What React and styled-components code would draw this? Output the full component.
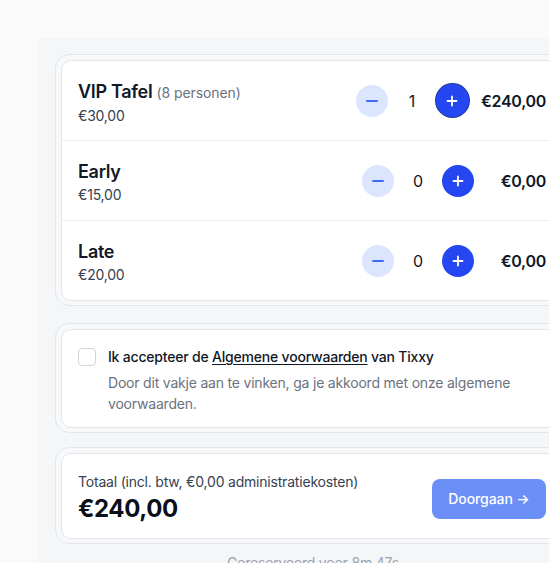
import React from "react";
import styled, { createGlobalStyle, css } from "styled-components";

const Global = createGlobalStyle`
  html, body { margin: 0; padding: 0; overflow: hidden; background: #fafafb; }
  body { font-family: Inter, "Noto Sans", sans-serif; color: #111827; letter-spacing: -0.2px; -webkit-font-smoothing: antialiased; }
  * { box-sizing: border-box; }
`;

const Page = styled.div`
  width: 700px;
  padding: 38px 0 0 38px;
`;

const Panel = styled.div`
  width: 550px;
  background: #f5f6f8;
  padding: 16px 17px 0 17px;
  display: flex;
  flex-direction: column;
`;

const Ring = styled.div`
  border: 1px solid #e4e6ea;
  border-radius: 14px;
  padding: 5px 4px 4px 5px;
  background: #f7f8fa;
  margin-top: ${(p) => p.$mt || 0}px;
`;

const Card = styled.div`
  background: #fff;
  border: 1px solid #e4e6ea;
  border-radius: 10px;
  overflow: hidden;
`;

const Row = styled.div`
  height: 79px;
  display: flex;
  align-items: center;
  padding: 0 19px 0 16px;
  & + & { border-top: 1px solid #eef0f3; height: 80px; }
`;

const Info = styled.div`
  flex: 1;
  display: flex;
  flex-direction: column;
  gap: 1px;
  padding-top: 4px;
`;

const Name = styled.div`
  font-size: 18px;
  font-weight: 600;
  line-height: 24px;
  color: #111827;
  letter-spacing: -0.3px;
`;

const Note = styled.span`
  font-size: 14px;
  font-weight: 400;
  color: #6b7280;
  letter-spacing: -0.1px;
`;

const Price = styled.div`
  font-size: 14px;
  color: #374151;
  line-height: 20px;
`;

const Stepper = styled.div`
  display: flex;
  align-items: center;
  gap: 12px;
`;

const RoundBtn = styled.button`
  width: 32px;
  height: 32px;
  border-radius: 50%;
  border: none;
  padding: 0;
  display: flex;
  align-items: center;
  justify-content: center;
  ${(p) =>
    p.$variant === "minus"
      ? css`background: #dbe6fe; color: #3d6cf2;`
      : css`background: #2447f2; color: #fff;`}
  ${(p) => p.$focus && css`box-shadow: 0 0 0 1px #1e3a9a; width: 33px; height: 33px;`}
`;

const Count = styled.div`
  width: 24px;
  text-align: center;
  font-size: 16px;
  color: #111827;
`;

const Amount = styled.div`
  min-width: 60px;
  text-align: right;
  font-size: 16px;
  font-weight: 600;
  color: #111827;
  letter-spacing: -0.3px;
`;

const Terms = styled.div`
  display: flex;
  gap: 12px;
  padding: 17px 19px 13px 16px;
`;

const Box = styled.div`
  width: 18px;
  height: 18px;
  flex: none;
  border: 1px solid #d1d5db;
  border-radius: 4px;
  margin-top: 1px;
  background: #fff;
`;

const TermsText = styled.div`
  display: flex;
  flex-direction: column;
  gap: 5px;
`;

const TermsLabel = styled.div`
  font-size: 14px;
  font-weight: 500;
  line-height: 20px;
  color: #111827;
  a { color: inherit; text-decoration: underline; text-underline-offset: 2px; }
`;

const TermsDesc = styled.div`
  font-size: 14px;
  line-height: 21px;
  color: #6b7280;
`;

const TotalRow = styled.div`
  display: flex;
  align-items: center;
  justify-content: space-between;
  padding: 18px 19px 13px 16px;
`;

const TotalInfo = styled.div`
  display: flex;
  flex-direction: column;
  gap: 1px;
`;

const TotalLabel = styled.div`
  font-size: 14px;
  line-height: 20px;
  color: #374151;
`;

const TotalValue = styled.div`
  font-size: 24px;
  font-weight: 700;
  line-height: 32px;
  color: #0b0f19;
  letter-spacing: -0.4px;
`;

const Go = styled.button`
  width: 114px;
  height: 40px;
  border: none;
  border-radius: 8px;
  background: #6c8ff7;
  color: #fff;
  font-family: inherit;
  font-size: 14px;
  font-weight: 500;
  letter-spacing: -0.1px;
`;

const Reserved = styled.div`
  text-align: center;
  font-size: 14px;
  color: #9ca3af;
  padding-top: 10px;
`;

const Minus = () => (
  <svg width="14" height="14" viewBox="0 0 14 14">
    <path d="M2 7h10" stroke="currentColor" strokeWidth="2" strokeLinecap="round" />
  </svg>
);
const Plus = () => (
  <svg width="12" height="12" viewBox="0 0 12 12">
    <path d="M6 1.5v9M1.5 6h9" stroke="currentColor" strokeWidth="1.8" strokeLinecap="round" />
  </svg>
);

const items = [
  { name: "VIP Tafel", note: "(8 personen)", price: "€30,00", count: 1, total: "€240,00", focus: true },
  { name: "Early", price: "€15,00", count: 0, total: "€0,00" },
  { name: "Late", price: "€20,00", count: 0, total: "€0,00" },
];

export default function App() {
  return (
    <>
      <Global />
      <Page>
        <Panel>
          <Ring>
            <Card>
              {items.map((it) => (
                <Row key={it.name}>
                  <Info>
                    <Name>
                      {it.name} {it.note && <Note>{it.note}</Note>}
                    </Name>
                    <Price>{it.price}</Price>
                  </Info>
                  <Stepper>
                    <RoundBtn $variant="minus"><Minus /></RoundBtn>
                    <Count>{it.count}</Count>
                    <RoundBtn $variant="plus" $focus={it.focus}><Plus /></RoundBtn>
                    <Amount>{it.total}</Amount>
                  </Stepper>
                </Row>
              ))}
            </Card>
          </Ring>
          <Ring $mt={17}>
            <Card>
              <Terms>
                <Box />
                <TermsText>
                  <TermsLabel>
                    Ik accepteer de <a>Algemene voorwaarden</a> van Tixxy
                  </TermsLabel>
                  <TermsDesc>
                    Door dit vakje aan te vinken, ga je akkoord met onze algemene voorwaarden.
                  </TermsDesc>
                </TermsText>
              </Terms>
            </Card>
          </Ring>
          <Ring $mt={14}>
            <Card>
              <TotalRow>
                <TotalInfo>
                  <TotalLabel>Totaal (incl. btw, €0,00 administratiekosten)</TotalLabel>
                  <TotalValue>€240,00</TotalValue>
                </TotalInfo>
                <Go>Doorgaan →</Go>
              </TotalRow>
            </Card>
          </Ring>
          <Reserved>Gereserveerd voor 8m 47s</Reserved>
        </Panel>
      </Page>
    </>
  );
}
